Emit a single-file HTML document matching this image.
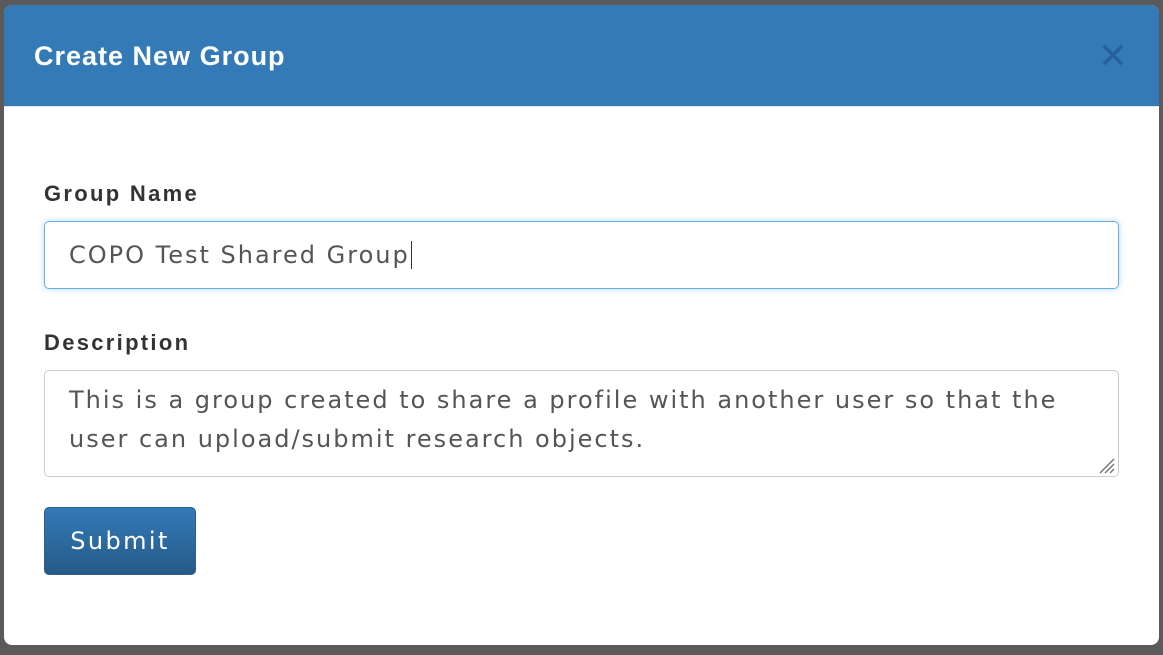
<!DOCTYPE html>
<html><head><style>
html,body{margin:0;padding:0;width:1163px;height:655px;background:#5a5a5a;overflow:hidden}
.modal{position:absolute;left:4px;top:5px;width:1155px;height:640px;background:#fff;border-radius:8px;overflow:hidden}
.hdr{height:101px;background:#337ab7;border-bottom:1px solid #e5e5e5;position:relative}
.hdr h4{margin:0;position:absolute;left:30px;top:36px;font:bold 27px "Liberation Sans",sans-serif;color:#fff;letter-spacing:1px}
.x{position:absolute;left:1096px;top:37px;width:26px;height:26px}
label{position:absolute;left:40px;font:bold 22px "Liberation Sans",sans-serif;color:#333;letter-spacing:2.3px}
.in{position:absolute;left:40px;width:1075px;border:1px solid #ccc;border-radius:5px;box-sizing:border-box;font:24px "DejaVu Sans",sans-serif;color:#555;padding:0 24px;letter-spacing:2px}
.btn{position:absolute;left:40px;top:502px;width:152px;height:68px;border-radius:5px;border:1px solid #2b5f8e;box-sizing:border-box;background:linear-gradient(#337ab7,#265a88);color:#fff;font:24px "DejaVu Sans",sans-serif;text-align:center;line-height:66px;letter-spacing:2.4px}
.grip{position:absolute;left:1092px;top:450px;width:20px;height:20px}
</style></head><body>
<div class="modal">
<div class="hdr"><h4>Create New Group</h4>
<svg class="x" viewBox="0 0 26 26"><path d="M4 4L22 22M22 4L4 22" stroke="#28609a" stroke-width="3.5"/></svg></div>
<label style="top:176px">Group Name</label>
<div class="in" style="top:216px;height:68px;line-height:66px;border-color:#66afe9;box-shadow:0 0 6px rgba(102,175,233,.5)">COPO Test Shared Group<span style="border-left:1px solid #333;margin-left:1px"></span></div>
<label style="top:325px">Description</label>
<div class="in" style="top:365px;height:107px;line-height:39px;padding-top:10px">This is a group created to share a profile with another user so that the user can upload/submit research objects.</div>
<svg class="grip" viewBox="0 0 20 20"><path d="M18 4L4 18M18 9L9 18M18 14L14 18" stroke="#777" stroke-width="1.5"/></svg>
<div class="btn">Submit</div>
</div>
</body></html>
